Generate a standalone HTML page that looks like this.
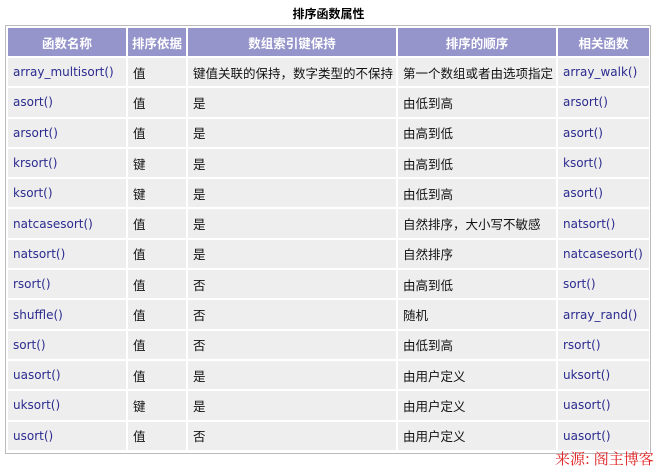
<!DOCTYPE html><html><head><meta charset="utf-8"><style>
body{margin:0;width:657px;height:467px;background:#fff;font-family:"Liberation Sans","Noto Sans CJK SC",sans-serif;position:relative;overflow:hidden}
.t{position:absolute;top:5px;left:0;width:657px;text-align:center;font-size:12px;font-weight:bold;color:#000}
.box{position:absolute;left:5px;top:25px;width:646px;height:429px;border:1px solid #bbb;box-sizing:border-box}
table{position:absolute;left:6px;top:26px;border-collapse:separate;border-spacing:2px;font-size:12.5px;table-layout:fixed;width:645px}
td,th{background:#eeeeee;height:28.3px;padding:0 0 0 5px;text-align:left;color:#111;white-space:nowrap;overflow:hidden;box-sizing:border-box;vertical-align:middle}
th{background:#9595cb;color:#fff;text-align:center;padding:0;font-size:12.5px;height:28px}
td.a{color:#2b2b8f;font-family:"DejaVu Sans",sans-serif;font-size:12px}
</style></head><body>
<div class="t">排序函数属性</div>
<div class="box"></div>
<table>
<colgroup><col style="width:118px"><col style="width:58px"><col style="width:208px"><col style="width:158px"><col style="width:91px"></colgroup>
<tr><th>函数名称</th><th>排序依据</th><th>数组索引键保持</th><th>排序的顺序</th><th>相关函数</th></tr>
<tr><td class="a">array_multisort()</td><td>值</td><td>键值关联的保持，数字类型的不保持</td><td>第一个数组或者由选项指定</td><td class="a">array_walk()</td></tr>
<tr><td class="a">asort()</td><td>值</td><td>是</td><td>由低到高</td><td class="a">arsort()</td></tr>
<tr><td class="a">arsort()</td><td>值</td><td>是</td><td>由高到低</td><td class="a">asort()</td></tr>
<tr><td class="a">krsort()</td><td>键</td><td>是</td><td>由高到低</td><td class="a">ksort()</td></tr>
<tr><td class="a">ksort()</td><td>键</td><td>是</td><td>由低到高</td><td class="a">asort()</td></tr>
<tr><td class="a">natcasesort()</td><td>值</td><td>是</td><td>自然排序，大小写不敏感</td><td class="a">natsort()</td></tr>
<tr><td class="a">natsort()</td><td>值</td><td>是</td><td>自然排序</td><td class="a">natcasesort()</td></tr>
<tr><td class="a">rsort()</td><td>值</td><td>否</td><td>由高到低</td><td class="a">sort()</td></tr>
<tr><td class="a">shuffle()</td><td>值</td><td>否</td><td>随机</td><td class="a">array_rand()</td></tr>
<tr><td class="a">sort()</td><td>值</td><td>否</td><td>由低到高</td><td class="a">rsort()</td></tr>
<tr><td class="a">uasort()</td><td>值</td><td>是</td><td>由用户定义</td><td class="a">uksort()</td></tr>
<tr><td class="a">uksort()</td><td>键</td><td>是</td><td>由用户定义</td><td class="a">uasort()</td></tr>
<tr><td class="a">usort()</td><td>值</td><td>否</td><td>由用户定义</td><td class="a">uasort()</td></tr>
</table>
<div style="position:absolute;left:555px;top:450px;font-size:15px;color:#e02020;font-family:'Noto Serif CJK SC','Liberation Serif',serif;line-height:17px;white-space:nowrap">来源: 阁主博客</div>
</body></html>
